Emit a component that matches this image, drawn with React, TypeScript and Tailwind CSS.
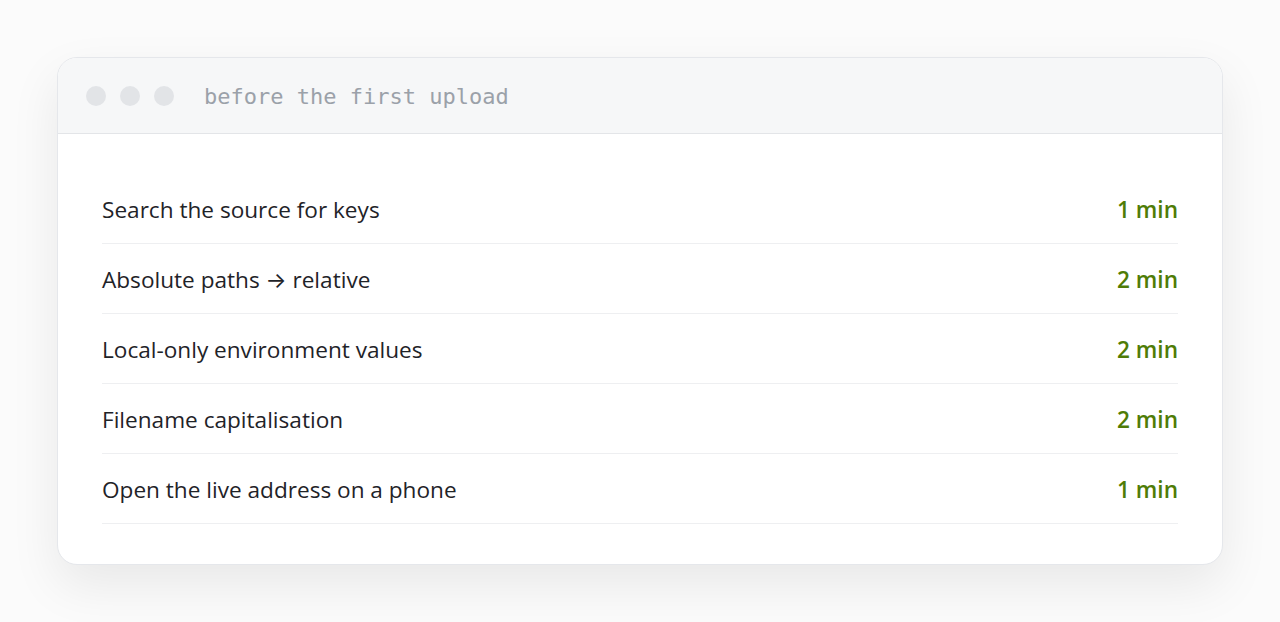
const items = [
  { label: "Search the source for keys", time: "1 min" },
  { label: "Absolute paths", arrow: "relative", time: "2 min" },
  { label: "Local-only environment values", time: "2 min" },
  { label: "Filename capitalisation", time: "2 min" },
  { label: "Open the live address on a phone", time: "1 min" },
];

export default function App() {
  return (
    <div className="min-h-[622px] w-full bg-[#fbfbfb] px-[57px] pt-[57px] pb-[58px]">
      <div className="overflow-hidden rounded-[20px] border border-[#e5e7eb] bg-white shadow-[0_20px_50px_rgba(0,0,0,0.08)]">
        <div className="flex h-[76px] items-center border-b border-[#e3e5e8] bg-[#f6f7f8] pl-[28px]">
          <div className="flex gap-[14px]">
            <span className="h-[20px] w-[20px] rounded-full bg-[#e2e4e7]" />
            <span className="h-[20px] w-[20px] rounded-full bg-[#e2e4e7]" />
            <span className="h-[20px] w-[20px] rounded-full bg-[#e2e4e7]" />
          </div>
          <span
            className="ml-[30px] pt-[2px] text-[22px] text-[#9ba1a9]"
            style={{ fontFamily: '"DejaVu Sans Mono", monospace' }}
          >
            before the first upload
          </span>
        </div>
        <div className="px-[44px] pt-[40px] pb-[40px]">
          {items.map((it) => (
            <div
              key={it.label}
              className="flex h-[70px] items-center justify-between border-b border-[#eeeff1] pt-[2px]"
            >
              <span
                className="text-[22.6px] text-[#1f2328]"
                style={{ fontFamily: '"Open Sans", sans-serif' }}
              >
                {it.label}
                {it.arrow && (
                  <>
                    {" "}
                    <span
                      className="text-[22px]"
                      style={{ fontFamily: 'Inter, sans-serif' }}
                    >
                      →
                    </span>{" "}
                    {it.arrow}
                  </>
                )}
              </span>
              <span
                className="text-[22.6px] font-semibold text-[#4f7c06]"
                style={{ fontFamily: '"Open Sans", sans-serif' }}
              >
                {it.time}
              </span>
            </div>
          ))}
        </div>
      </div>
    </div>
  );
}
